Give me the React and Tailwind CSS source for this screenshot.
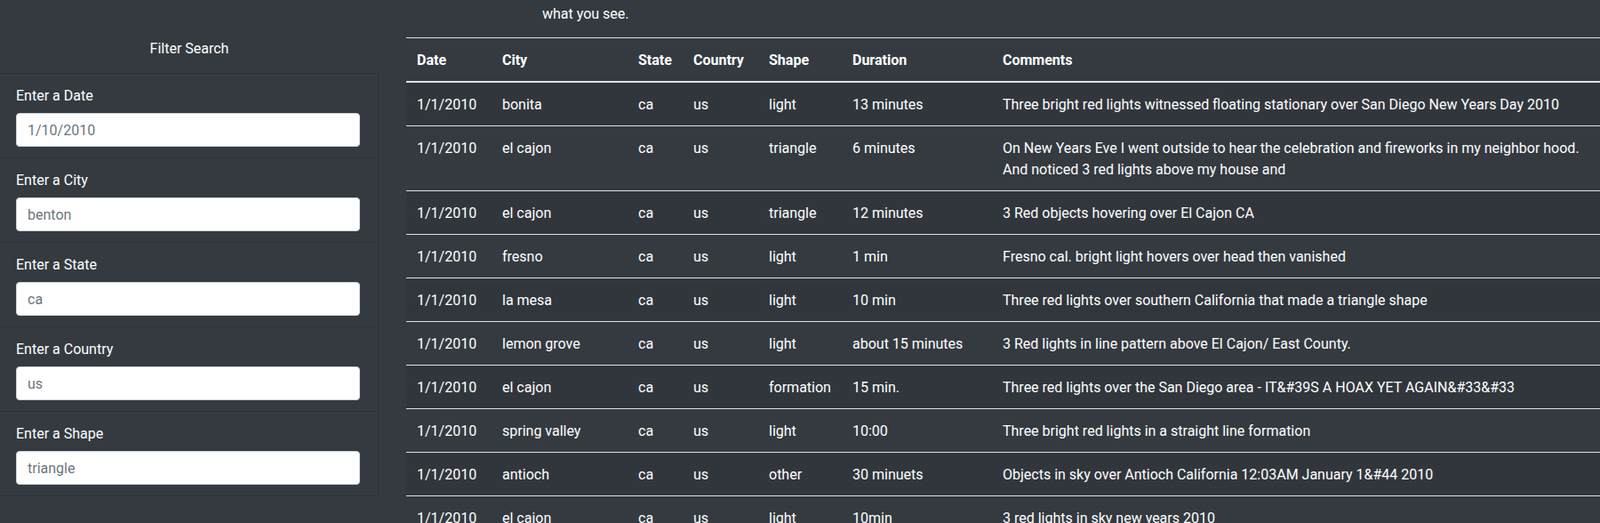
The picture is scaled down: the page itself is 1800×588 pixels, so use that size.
import React from "react";

const FONT = 'Roboto, "Liberation Sans", sans-serif';

const rows = [
  ["1/1/2010", "bonita", "ca", "us", "light", "13 minutes", ["Three bright red lights witnessed floating stationary over San Diego New Years Day 2010"]],
  ["1/1/2010", "el cajon", "ca", "us", "triangle", "6 minutes", ["On New Years Eve I went outside to hear the celebration and fireworks in my neighbor hood.", "And noticed 3 red lights above my house and"]],
  ["1/1/2010", "el cajon", "ca", "us", "triangle", "12 minutes", ["3 Red objects hovering over El Cajon CA"]],
  ["1/1/2010", "fresno", "ca", "us", "light", "1 min", ["Fresno cal. bright light hovers over head then vanished"]],
  ["1/1/2010", "la mesa", "ca", "us", "light", "10 min", ["Three red lights over southern California that made a triangle shape"]],
  ["1/1/2010", "lemon grove", "ca", "us", "light", "about 15 minutes", ["3 Red lights in line pattern above El Cajon/ East County."]],
  ["1/1/2010", "el cajon", "ca", "us", "formation", "15 min.", ["Three red lights over the San Diego area - IT&#39S A HOAX YET AGAIN&#33&#33"]],
  ["1/1/2010", "spring valley", "ca", "us", "light", "10:00", ["Three bright red lights in a straight line formation"]],
  ["1/1/2010", "antioch", "ca", "us", "other", "30 minuets", ["Objects in sky over Antioch California 12:03AM January 1&#44 2010"]],
  ["1/1/2010", "el cajon", "ca", "us", "light", "10min", ["3 red lights in sky new years 2010"]],
];

const filters = [
  ["Enter a Date", "1/10/2010"],
  ["Enter a City", "benton"],
  ["Enter a State", "ca"],
  ["Enter a Country", "us"],
  ["Enter a Shape", "triangle"],
];

export default function App() {
  return (
    <div className="relative w-[1800px] h-[588px] overflow-hidden bg-[#343a40] text-white flex" style={{ fontFamily: FONT }}>
      <aside className="w-[426px] shrink-0">
        <div className="pt-[43px] pb-[15px] text-center text-[16px] leading-[24px]">Filter Search</div>
        <ul className="border-t border-r border-[#2c3136]">
          {filters.map(([label, ph]) => (
            <li key={label} className="border-b border-[#2c3136] pl-[18px] pr-[20px] pt-[12px] pb-[12px]">
              <label className="block text-[16px] leading-[24px] pt-[1px] h-[24px] mb-[8px]">{label}</label>
              <input
                placeholder={ph}
                className="block w-full h-[38px] rounded-[4px] border border-[#ced4da] bg-white px-[12px] text-[16px] text-[#495057] placeholder:text-[#6c757d] outline-none"
                style={{ fontFamily: FONT }}
              />
            </li>
          ))}
        </ul>
      </aside>
      <main className="flex-1 pl-[31px] min-w-0">
        <div className="h-[42px] pt-[4px] pl-[153px] text-[16px] leading-[24px]">what you see.</div>
        <table className="w-full table-fixed border-collapse text-[16px] leading-[24px]">
          <colgroup>
            <col className="w-[96px]" />
            <col className="w-[153px]" />
            <col className="w-[62px]" />
            <col className="w-[85px]" />
            <col className="w-[94px]" />
            <col className="w-[169px]" />
            <col />
          </colgroup>
          <thead>
            <tr>
              {["Date", "City", "State", "Country", "Shape", "Duration", "Comments"].map((h) => (
                <th key={h} className="border-t border-b-2 border-[#dee2e6] px-[12px] pt-[13px] pb-[11px] text-left font-bold align-bottom whitespace-nowrap">{h}</th>
              ))}
            </tr>
          </thead>
          <tbody>
            {rows.map((r, i) => (
              <tr key={i} className={i % 2 === 0 ? "bg-[#31363c]" : ""}>
                {r.slice(0, 6).map((c, j) => (
                  <td key={j} className="border-t border-[#dee2e6] px-[12px] pt-[13px] pb-[11px] align-top whitespace-nowrap">{c}</td>
                ))}
                <td className="border-t border-[#dee2e6] px-[12px] pt-[13px] pb-[11px] align-top whitespace-nowrap">
                  {r[6].map((line, k) => (
                    <div key={k}>{line}</div>
                  ))}
                </td>
              </tr>
            ))}
          </tbody>
        </table>
      </main>
    </div>
  );
}
